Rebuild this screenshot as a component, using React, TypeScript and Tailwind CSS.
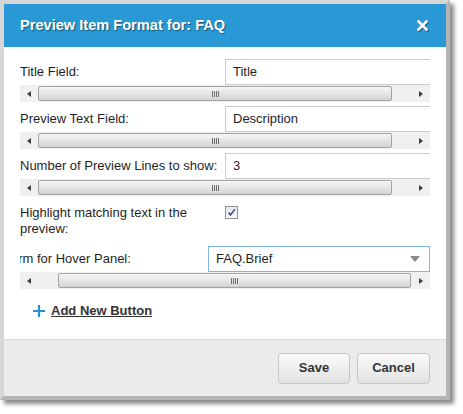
import React from "react";

interface ScrollbarProps {
  thumb: string;
}

const Scrollbar: React.FC<ScrollbarProps> = ({ thumb }) => (
  <div className="flex h-[17px] items-center bg-[#f0f0f0]">
    <div className="flex h-full w-[18px] shrink-0 items-center justify-center">
      <div className="h-0 w-0 border-y-[3.5px] border-r-[4px] border-y-transparent border-r-[#3c3c3c]" />
    </div>
    <div className="flex h-full flex-1 items-center">
      <div
        className={`flex h-[15px] items-center justify-center rounded-[2px] border border-[#a3a3a3] bg-gradient-to-b from-[#f5f5f5] via-[#e6e6e6] to-[#d2d2d2] ${thumb}`}
      >
        <div className="flex gap-[1px]">
          <div className="h-[6px] w-px bg-[#6e6e6e]" />
          <div className="h-[6px] w-px bg-[#6e6e6e]" />
          <div className="h-[6px] w-px bg-[#6e6e6e]" />
          <div className="h-[6px] w-px bg-[#6e6e6e]" />
        </div>
      </div>
    </div>
    <div className="flex h-full w-[18px] shrink-0 items-center justify-center">
      <div className="h-0 w-0 border-y-[3.5px] border-l-[4px] border-y-transparent border-l-[#3c3c3c]" />
    </div>
  </div>
);

interface FieldRowProps {
  label: string;
  value: string;
}

const FieldRow: React.FC<FieldRowProps> = ({ label, value }) => (
  <div className="mb-[4px]">
    <div className="h-[26px] overflow-hidden">
      <div className="flex h-full w-[620px] items-center">
        <div className="w-[205px] shrink-0">{label}</div>
        <div className="flex h-[26px] w-[320px] items-center border border-[#cbcbcb] bg-white pl-[7px]">
          {value}
        </div>
      </div>
    </div>
    <Scrollbar thumb="ml-0 w-[354px]" />
  </div>
);

const App: React.FC = () => (
  <div className="h-[414px] w-[463px] overflow-hidden bg-white font-['Liberation_Sans',Arial,sans-serif] text-[13px] text-[#1f1f1f]">
    <div className="flex h-[400px] w-[450px] flex-col border-4 border-[#d6d6d6] border-r-[#b4b4b4] border-b-[#b4b4b4] shadow-[4px_4px_4px_rgba(0,0,0,0.45)]">
      {/* header */}
      <div className="flex h-[43px] shrink-0 items-center justify-between bg-[#2999d6] pl-4 pr-[18px]">
        <h1 className="text-[14.6px] font-bold text-white [text-shadow:1px_1px_1px_rgba(0,0,0,0.45)]">
          Preview Item Format for: FAQ
        </h1>
        <svg
          width="11"
          height="11"
          viewBox="0 0 11 11"
          className="[filter:drop-shadow(1px_1px_0.5px_rgba(0,0,0,0.4))]"
        >
          <path d="M1.5 1.5 L9.5 9.5 M9.5 1.5 L1.5 9.5" stroke="#fff" strokeWidth="2.6" strokeLinecap="square" />
        </svg>
      </div>

      {/* body */}
      <div className="h-[292px] shrink-0 bg-white px-4 pt-3">
        <FieldRow label="Title Field:" value="Title" />
        <FieldRow label="Preview Text Field:" value="Description" />
        <FieldRow label="Number of Preview Lines to show:" value="3" />

        <div className="mt-[9px] flex leading-4">
          <div className="w-[205px] shrink-0 pr-2">Highlight matching text in the preview:</div>
          <div className="mt-[1px] flex h-[13px] w-[13px] items-center justify-center border border-[#8e8f8f] bg-gradient-to-b from-[#e9e9e9] to-[#fafafa]">
            <svg width="9" height="9" viewBox="0 0 9 9">
              <path d="M1.5 4.5 L3.5 7 L7.8 1.2" stroke="#3b4e95" strokeWidth="1.6" fill="none" />
            </svg>
          </div>
        </div>

        <div className="mt-[9px]">
          <div className="h-[26px] overflow-hidden">
            <div className="-ml-[17px] flex h-full w-[620px] items-center">
              <div className="w-[205px] shrink-0">Form for Hover Panel:</div>
              <div className="flex h-[26px] w-[222px] shrink-0 items-center justify-between border border-[#7fb5e8] bg-white pl-[7px] pr-[9px]">
                <span>FAQ.Brief</span>
                <div className="h-0 w-0 border-x-[5px] border-t-[6px] border-x-transparent border-t-[#8a8a8a]" />
              </div>
            </div>
          </div>
          <Scrollbar thumb="ml-[20px] w-[353px]" />
        </div>

        <div className="mt-[12px] flex items-center gap-[6px] pl-[13px]">
          <svg width="12" height="12" viewBox="0 0 12 12">
            <path d="M6 0 V12 M0 6 H12" stroke="#2a8fcf" strokeWidth="2.2" />
          </svg>
          <span className="font-bold text-[#333] underline">Add New Button</span>
        </div>
      </div>

      {/* footer */}
      <div className="flex h-[57px] shrink-0 items-center justify-end gap-[7px] border-t border-[#d9d9d9] bg-[#ebebeb] pr-4">
        <button className="h-[31px] w-[72px] rounded-[4px] border border-[#c6c6c6] bg-gradient-to-b from-[#fafafa] to-[#e3e3e3] font-bold text-[#333]">
          Save
        </button>
        <button className="h-[31px] w-[73px] rounded-[4px] border border-[#c6c6c6] bg-gradient-to-b from-[#fafafa] to-[#e3e3e3] font-bold text-[#333]">
          Cancel
        </button>
      </div>
    </div>
  </div>
);

export default App;
